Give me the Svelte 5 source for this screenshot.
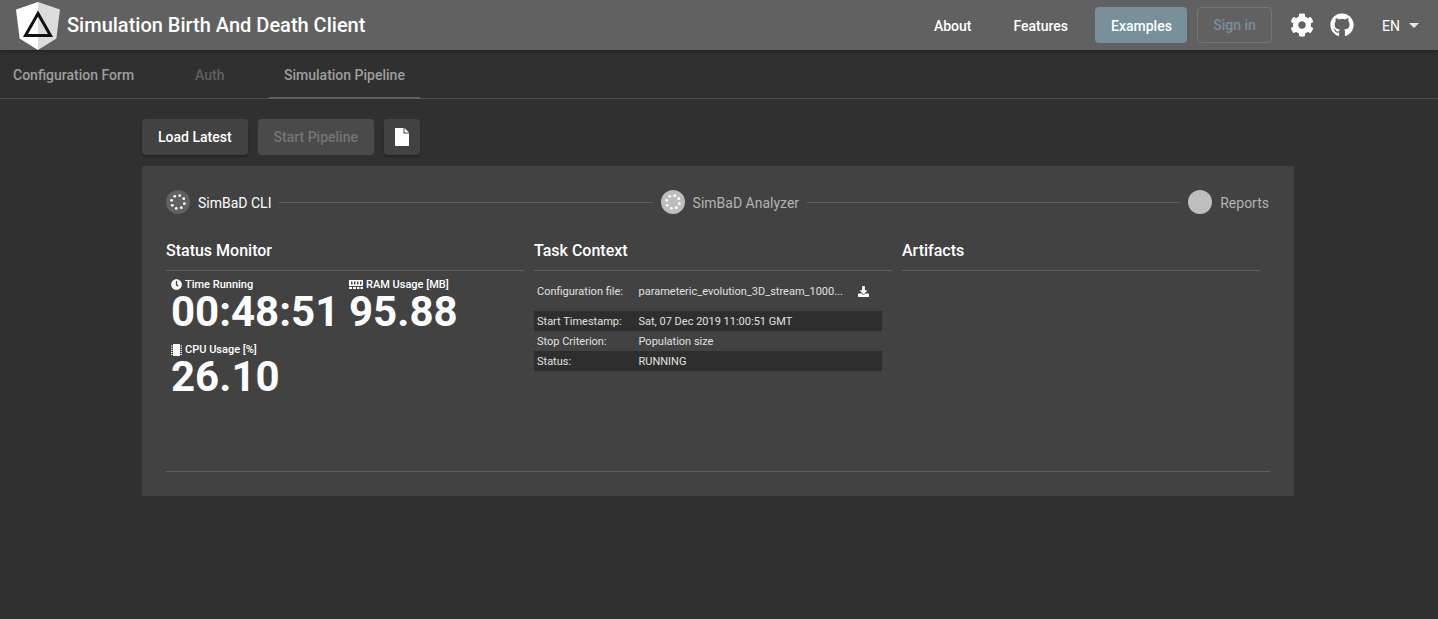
<script>
  const table = [
    ['Start Timestamp:', 'Sat, 07 Dec 2019 11:00:51 GMT'],
    ['Stop Criterion:', 'Population size'],
    ['Status:', 'RUNNING']
  ];
  const dots = [0, 45, 90, 135, 180, 225, 270, 315];
</script>

{#snippet spinner(fill)}
  <svg class="step-dots" viewBox="0 0 24 24">
    <circle cx="12" cy="12" r="12" fill={fill} />
    {#each dots as a}
      <circle cx={12 + 6.6 * Math.cos(((a + 15) * Math.PI) / 180)} cy={12 + 6.6 * Math.sin(((a + 15) * Math.PI) / 180)} r="1.4" fill="#fff" />
    {/each}
  </svg>
{/snippet}

<div class="page">
  <header class="toolbar">
    <svg class="logo" viewBox="0 0 44 48">
      <path d="M22 0 0 7.5l3.6 29L22 48z" fill="#fff" />
      <path d="M22 0l22 7.5-3.6 29L22 48z" fill="#dcdcdc" />
      <path d="M22 11.5 9.5 33.5h25z" fill="none" stroke="#111" stroke-width="3" />
    </svg>
    <span class="title">Simulation Birth And Death Client</span>
    <nav class="nav">
      <span class="link about">About</span>
      <span class="link features">Features</span>
      <span class="link active">Examples</span>
      <span class="signin">Sign in</span>
      <svg class="cog" viewBox="0 0 512 512"><path fill="#fff" d="M487.4 315.7l-42.6-24.6c4.3-23.2 4.3-47 0-70.2l42.6-24.6c4.9-2.8 7.1-8.6 5.5-14-11.1-35.6-30-67.8-54.7-94.6-3.8-4.1-10-5.1-14.8-2.3L380.8 110c-17.9-15.4-38.5-27.3-60.8-35.1V25.8c0-5.6-3.9-10.5-9.4-11.7-36.7-8.2-74.3-7.8-109.2 0-5.5 1.2-9.4 6.1-9.4 11.7V75c-22.2 7.9-42.8 19.8-60.8 35.1L88.7 85.5c-4.9-2.8-11-1.9-14.8 2.3-24.7 26.7-43.6 58.9-54.7 94.6-1.7 5.4.6 11.2 5.5 14L67.3 221c-4.3 23.2-4.3 47 0 70.2l-42.6 24.6c-4.9 2.8-7.1 8.6-5.5 14 11.1 35.6 30 67.8 54.7 94.6 3.8 4.1 10 5.1 14.8 2.3l42.6-24.6c17.9 15.4 38.5 27.3 60.8 35.1v49.2c0 5.6 3.9 10.5 9.4 11.7 36.7 8.2 74.3 7.8 109.2 0 5.5-1.2 9.4-6.1 9.4-11.7v-49.2c22.2-7.9 42.8-19.8 60.8-35.1l42.6 24.6c4.9 2.8 11 1.9 14.8-2.3 24.7-26.7 43.6-58.9 54.7-94.6 1.5-5.5-.7-11.3-5.6-14.1zM256 336c-44.1 0-80-35.9-80-80s35.9-80 80-80 80 35.9 80 80-35.9 80-80 80z"/></svg>
      <svg class="gh" viewBox="0 0 496 512"><path fill="#fff" d="M165.9 397.4c0 2-2.3 3.6-5.2 3.6-3.3.3-5.6-1.3-5.6-3.6 0-2 2.3-3.6 5.2-3.6 3-.3 5.6 1.3 5.6 3.6zm-31.1-4.5c-.7 2 1.3 4.3 4.3 4.9 2.6 1 5.6 0 6.2-2s-1.3-4.3-4.3-5.2c-2.6-.7-5.5.3-6.2 2.3zm44.2-1.7c-2.9.7-4.9 2.6-4.6 4.9.3 2 2.9 3.3 5.9 2.6 2.9-.7 4.9-2.6 4.6-4.6-.3-1.9-3-3.2-5.9-2.9zM244.8 8C106.1 8 0 113.3 0 252c0 110.9 69.8 205.8 169.5 239.2 12.8 2.3 17.3-5.6 17.3-12.1 0-6.2-.3-40.4-.3-61.4 0 0-70 15-84.7-29.8 0 0-11.4-29.1-27.8-36.6 0 0-22.9-15.7 1.6-15.4 0 0 24.9 2 38.6 25.8 21.9 38.6 58.6 27.5 72.9 20.9 2.3-16 8.8-27.1 16-33.7-55.9-6.2-112.3-14.3-112.3-110.5 0-27.5 7.6-41.3 23.6-58.9-2.6-6.5-11.1-33.3 2.6-67.9 20.9-6.5 69 27 69 27 20-5.6 41.5-8.5 62.8-8.5s42.8 2.9 62.8 8.5c0 0 48.1-33.6 69-27 13.7 34.7 5.2 61.4 2.6 67.9 16 17.7 25.8 31.5 25.8 58.9 0 96.5-58.9 104.2-114.8 110.5 9.2 7.9 17 22.9 17 46.4 0 33.7-.3 75.4-.3 83.6 0 6.5 4.6 14.4 17.3 12.1C428.2 457.8 496 362.9 496 252 496 113.3 383.5 8 244.8 8zM97.2 352.9c-1.3 1-1 3.3.7 5.2 1.6 1.6 3.9 2.3 5.2 1 1.3-1 1-3.3-.7-5.2-1.6-1.6-3.9-2.3-5.2-1zm-10.8-8.1c-.7 1.3.3 2.9 2.3 3.9 1.6 1 3.6.7 4.3-.7.7-1.3-.3-2.9-2.3-3.9-2-.6-3.6-.3-4.3.7zm32.4 35.6c-1.6 1.3-1 4.3 1.3 6.2 2.3 2.3 5.2 2.6 6.5 1 1.3-1.3.7-4.3-1.3-6.2-2.2-2.3-5.2-2.6-6.5-1zm-11.4-14.7c-1.6 1-1.6 3.6 0 5.9 1.6 2.3 4.3 3.3 5.6 2.3 1.6-1.3 1.6-3.9 0-6.2-1.4-2.3-4-3.3-5.6-2z"/></svg>
      <span class="lang">EN<i class="caret"></i></span>
    </nav>
  </header>

  <div class="tabs">
    <span class="tab t1">Configuration Form</span>
    <span class="tab t2">Auth</span>
    <span class="tab t3">Simulation Pipeline</span>
  </div>

  <main class="main">
    <div class="actions">
      <button class="btn load">Load Latest</button>
      <button class="btn start">Start Pipeline</button>
      <button class="btn icon">
        <svg viewBox="0 0 14 18" width="14" height="18"><path fill="#fff" d="M0 0h8.5v5.5H14V18H0z"/><path fill="#fff" d="M9.5 0 14 4.5H9.5z"/></svg>
      </button>
    </div>

    <section class="card">
      <div class="stepper">
        <div class="step">
          {@render spinner('#616161')}
          <span class="label on">SimBaD CLI</span>
        </div>
        <div class="rule"></div>
        <div class="step">
          {@render spinner('#bdbdbd')}
          <span class="label">SimBaD Analyzer</span>
        </div>
        <div class="rule"></div>
        <div class="step">
          <span class="plain"></span>
          <span class="label">Reports</span>
        </div>
      </div>

      <div class="columns">
        <div class="col">
          <h3>Status Monitor</h3>
          <div class="metrics">
            <div class="metric m-time">
              <div class="mlabel">
                <svg viewBox="0 0 512 512" width="11" height="11"><path fill="#fff" d="M256 8C119 8 8 119 8 256s111 248 248 248 248-111 248-248S393 8 256 8zm92.5 313-20 25a16 16 0 0 1-22.500 2.500l-67-49.700a40 40 0 0 1-15-31.200V112a16 16 0 0 1 16-16h32a16 16 0 0 1 16 16v144l58 42.500a16 16 0 0 1 2.500 22.500z"/></svg>
                Time Running
              </div>
              <div class="value">00:48:51</div>
            </div>
            <div class="metric m-ram">
              <div class="mlabel">
                <svg viewBox="0 0 14 9" width="14" height="9"><path fill="#fff" fill-rule="evenodd" d="M0 0h14v6H0zM2 1.500v3h1.500v-3zm3 0v3h1.500v-3zm3 0v3h1.500v-3zm3 0v3h1.500v-3z"/><path fill="#fff" d="M0 7h3v2H0zM4 7h3v2H4zM8 7h2.500v2H8zM11.500 7H14v2h-2.500z"/></svg>
                RAM Usage [MB]
              </div>
              <div class="value">95.88</div>
            </div>
            <div class="metric m-cpu">
              <div class="mlabel">
                <svg viewBox="0 0 11 12" width="11" height="12"><path fill="#fff" d="M2 0h7v12H2zM0 1.500h1.500v1H0zM0 3.700h1.500v1H0zM0 5.900h1.500v1H0zM0 8.100h1.500v1H0zM0 10h1.500v1H0zM9.500 1.500H11v1H9.500zM9.500 3.700H11v1H9.500zM9.500 5.900H11v1H9.500zM9.500 8.100H11v1H9.500zM9.500 10H11v1H9.500z"/></svg>
                CPU Usage [%]
              </div>
              <div class="value">26.10</div>
            </div>
          </div>
        </div>

        <div class="col">
          <h3>Task Context</h3>
          <div class="table">
            <div class="row first">
              <span class="k">Configuration file:</span>
              <span class="v file">parameteric_evolution_3D_stream_1000...</span>
              <svg class="dl" viewBox="0 0 512 512" width="11" height="11"><path fill="#fff" d="M216 0h80c13.300 0 24 10.700 24 24v168h87.700c17.800 0 26.700 21.500 14.100 34.100L269.700 378.300c-7.500 7.500-19.800 7.500-27.300 0L90.100 226.100c-12.600-12.600-3.700-34.100 14.100-34.100H192V24c0-13.300 10.700-24 24-24zm296 376v112c0 13.300-10.700 24-24 24H24c-13.300 0-24-10.700-24-24V376c0-13.300 10.700-24 24-24h146.700l49 49c20.100 20.100 52.500 20.100 72.600 0l49-49H488c13.300 0 24 10.700 24 24z"/></svg>
            </div>
            {#each table as [k, v], i}
              <div class="row" class:dark={i % 2 === 0}>
                <span class="k">{k}</span>
                <span class="v">{v}</span>
              </div>
            {/each}
          </div>
        </div>

        <div class="col">
          <h3>Artifacts</h3>
        </div>
      </div>

      <div class="foot"></div>
    </section>
  </main>
</div>

<style>
  :global(body) {
    margin: 0;
    background: #303030;
  }
  .page {
    min-height: 619px;
    background: #303030;
    font-family: Roboto, "Liberation Sans", sans-serif;
    color: #fff;
  }
  .toolbar {
    height: 50px;
    background: #616161;
    display: flex;
    align-items: center;
    padding-left: 16px;
    box-sizing: border-box;
    box-shadow: 0 2px 4px rgba(0, 0, 0, 0.3);
  }
  .logo {
    width: 44px;
    height: 48px;
    margin-top: 1px;
  }
  .title {
    font-size: 20px;
    font-weight: 500;
    margin-left: 7px;
  }
  .nav {
    margin-left: auto;
    display: flex;
    align-items: center;
    font-size: 14px;
    font-weight: 500;
  }
  .link {
    padding: 0 16px;
    height: 36px;
    line-height: 38px;
    border-radius: 4px;
  }
  .features {
    margin-left: 10px;
  }
  .active {
    background: #78909c;
    margin-left: 11px;
    margin-right: 10px;
    width: 60px;
    box-sizing: content-box;
    white-space: nowrap;
  }
  .signin {
    box-sizing: border-box;
    height: 36px;
    line-height: 34px;
    border: 1px solid #757575;
    border-radius: 4px;
    color: #78909c;
    width: 75px;
    text-align: center;
    margin-top: -1px;
    white-space: nowrap;
  }
  .cog {
    width: 24px;
    height: 24px;
    margin-left: 18px;
  }
  .gh {
    width: 24px;
    height: 24px;
    margin-left: 16px;
  }
  .lang {
    margin-left: 28px;
    margin-right: 19px;
    display: flex;
    align-items: center;
    font-size: 14px;
    font-weight: 400;
    margin-top: 2px;
  }
  .caret {
    width: 0;
    height: 0;
    border-left: 5px solid transparent;
    border-right: 5px solid transparent;
    border-top: 5px solid rgba(255, 255, 255, 0.85);
    margin-left: 9px;
    margin-top: -2px;
  }
  .tabs {
    height: 49px;
    box-sizing: border-box;
    border-bottom: 1px solid #4f4f4f;
    display: flex;
    font-size: 14px;
    font-weight: 500;
  }
  .tab {
    display: block;
    height: 48px;
    line-height: 50px;
    box-sizing: border-box;
    color: #9e9e9e;
  }
  .t1 {
    margin-left: 13px;
    width: 182px;
  }
  .t2 {
    width: 74px;
    color: #616161;
  }
  .t3 {
    padding: 0 15px;
    border-bottom: 2px solid #616161;
    height: 49px;
  }
  .main {
    margin-left: 142px;
    width: 1152px;
    padding-top: 20px;
  }
  .actions {
    display: flex;
    gap: 10px;
    margin-bottom: 11px;
  }
  .btn {
    height: 36px;
    border: 0;
    border-radius: 4px;
    background: #424242;
    color: #fff;
    font: 500 14px Roboto, sans-serif;
    padding: 0 16px;
    box-shadow: 0 2px 2px rgba(0, 0, 0, 0.25);
  }
  .start {
    background: #4a4a4a;
    color: #757575;
    box-shadow: none;
  }
  .icon {
    width: 36px;
    padding: 0;
    display: flex;
    align-items: center;
    justify-content: center;
  }
  .card {
    box-sizing: border-box;
    height: 330px;
    background: #424242;
    padding: 24px;
    display: flex;
    flex-direction: column;
  }
  .stepper {
    display: flex;
    align-items: center;
    height: 24px;
    margin-bottom: 24px;
    margin-right: 1px;
  }
  .step {
    display: flex;
    align-items: center;
    gap: 8px;
  }
  .step-dots,
  .plain {
    width: 24px;
    height: 24px;
    display: block;
    flex: none;
  }
  .plain {
    border-radius: 50%;
    background: #bdbdbd;
  }
  .label {
    font-size: 14px;
    color: #b3b3b3;
    margin-top: 2px;
  }
  .label.on {
    color: #fff;
  }
  .rule {
    flex: 1;
    height: 1px;
    background: #5f5f5f;
    margin: 0 8px;
  }
  .columns {
    display: flex;
    flex: 1;
  }
  .col {
    width: 368px;
    padding-right: 10px;
    box-sizing: border-box;
  }
  h3 {
    margin: 0;
    padding-top: 3px;
    font-size: 16px;
    font-weight: 500;
    line-height: 19px;
    padding-bottom: 10px;
    border-bottom: 1px solid #5f5f5f;
  }
  .metrics {
    display: grid;
    grid-template-columns: 178px auto;
    justify-content: start;
    padding: 7px 0 0 5px;
    row-gap: 11px;
  }
  .mlabel {
    font-size: 11px;
    font-weight: 500;
    line-height: 13px;
    display: flex;
    align-items: center;
    gap: 3px;
  }
  .value {
    font-size: 42px;
    font-weight: 700;
    line-height: 41px;
  }
  .table {
    width: 348px;
    font-size: 11px;
    margin-top: 10px;
    color: #e0e0e0;
  }
  .row {
    display: flex;
    align-items: center;
    height: 20px;
    padding-left: 3px;
  }
  .row.first {
    height: 20px;
    margin-bottom: 10px;
  }
  .row.dark {
    background: #2e2e2e;
  }
  .k {
    width: 101.500px;
    flex: none;
  }
  .file {
    width: 220px;
    white-space: nowrap;
    flex: none;
  }
  .dl {
    margin-left: -1px;
  }
  .foot {
    height: 1px;
    background: #5f5f5f;
  }
</style>
